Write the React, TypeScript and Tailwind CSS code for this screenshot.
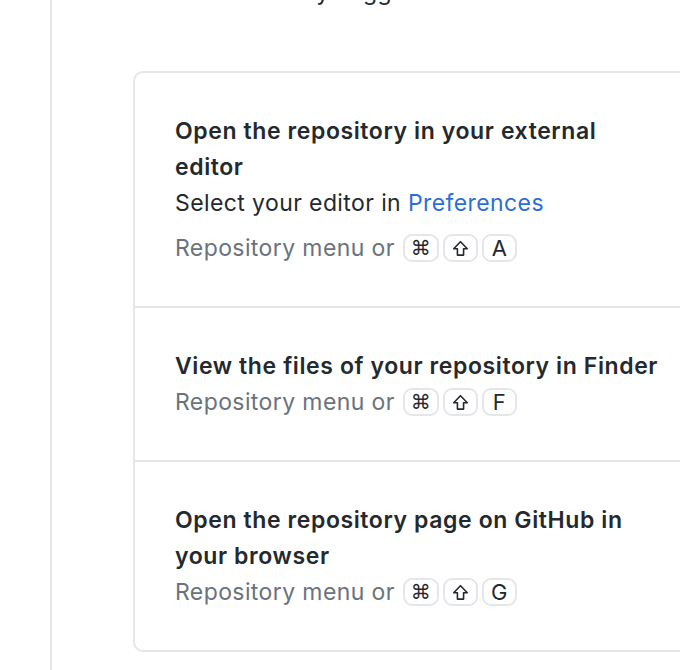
import React from 'react';

const ShiftIcon = () => (
  <svg width="17" height="17" viewBox="0 0 16 16" fill="none" stroke="currentColor" strokeWidth="1.5" strokeLinejoin="round">
    <path d="M8 1.6 L14.4 8.2 H10.9 V14.2 H5.1 V8.2 H1.6 Z" />
  </svg>
);

const Key = ({ children }: { children: React.ReactNode }) => (
  <kbd className="inline-flex h-[28px] min-w-[35px] items-center justify-center rounded-[9px] border-2 border-[#e4e6ea] bg-white px-[6px] text-[22px] leading-none tracking-normal text-[#24292e] font-['Inter',sans-serif]">
    {children}
  </kbd>
);

const Shortcut = ({ letter }: { letter: string }) => (
  <div className="flex h-[36px] items-center text-[#6a737d]">
    <span className="mr-[8px]">Repository menu or</span>
    <div className="flex gap-[4px]">
      <Key>
        <span className="font-['DejaVu_Sans',sans-serif] text-[20px]">⌘</span>
      </Key>
      <Key>
        <ShiftIcon />
      </Key>
      <Key>{letter}</Key>
    </div>
  </div>
);

const Row = ({ children, last }: { children: React.ReactNode; last?: boolean }) => (
  <div className={`px-[40px] py-[40px] ${last ? '' : 'border-b-2 border-[#e4e6ea]'}`}>{children}</div>
);

export default function App() {
  return (
    <div className="h-[670px] w-[680px] overflow-hidden bg-white font-['Inter',sans-serif] text-[23px] leading-[36px] tracking-[0.4px]">
      <div className="ml-[50px] flex h-full flex-col border-l-2 border-[#e4e6ea] pl-[81px]">
        <p className="-mt-[26px] whitespace-nowrap text-[#24292e]">
          are some friendly suggestions for what to do next.
        </p>
        <div className="mt-[61px] w-[640px] shrink-0 rounded-[10px] border-2 border-[#e4e6ea]">
          <Row>
            <div className="w-[470px] font-semibold tracking-[0.6px] text-[#24292e]">
              Open the repository in your external editor
            </div>
            <div className="mb-[9px] text-[#24292e]">
              Select your editor in <a className="text-[#2b6fd6]">Preferences</a>
            </div>
            <Shortcut letter="A" />
          </Row>
          <Row>
            <div className="whitespace-nowrap font-semibold tracking-[0.6px] text-[#24292e]">
              View the files of your repository in Finder
            </div>
            <Shortcut letter="F" />
          </Row>
          <Row last>
            <div className="w-[470px] font-semibold tracking-[0.6px] text-[#24292e]">
              Open the repository page on GitHub in your browser
            </div>
            <Shortcut letter="G" />
          </Row>
        </div>
      </div>
    </div>
  );
}
